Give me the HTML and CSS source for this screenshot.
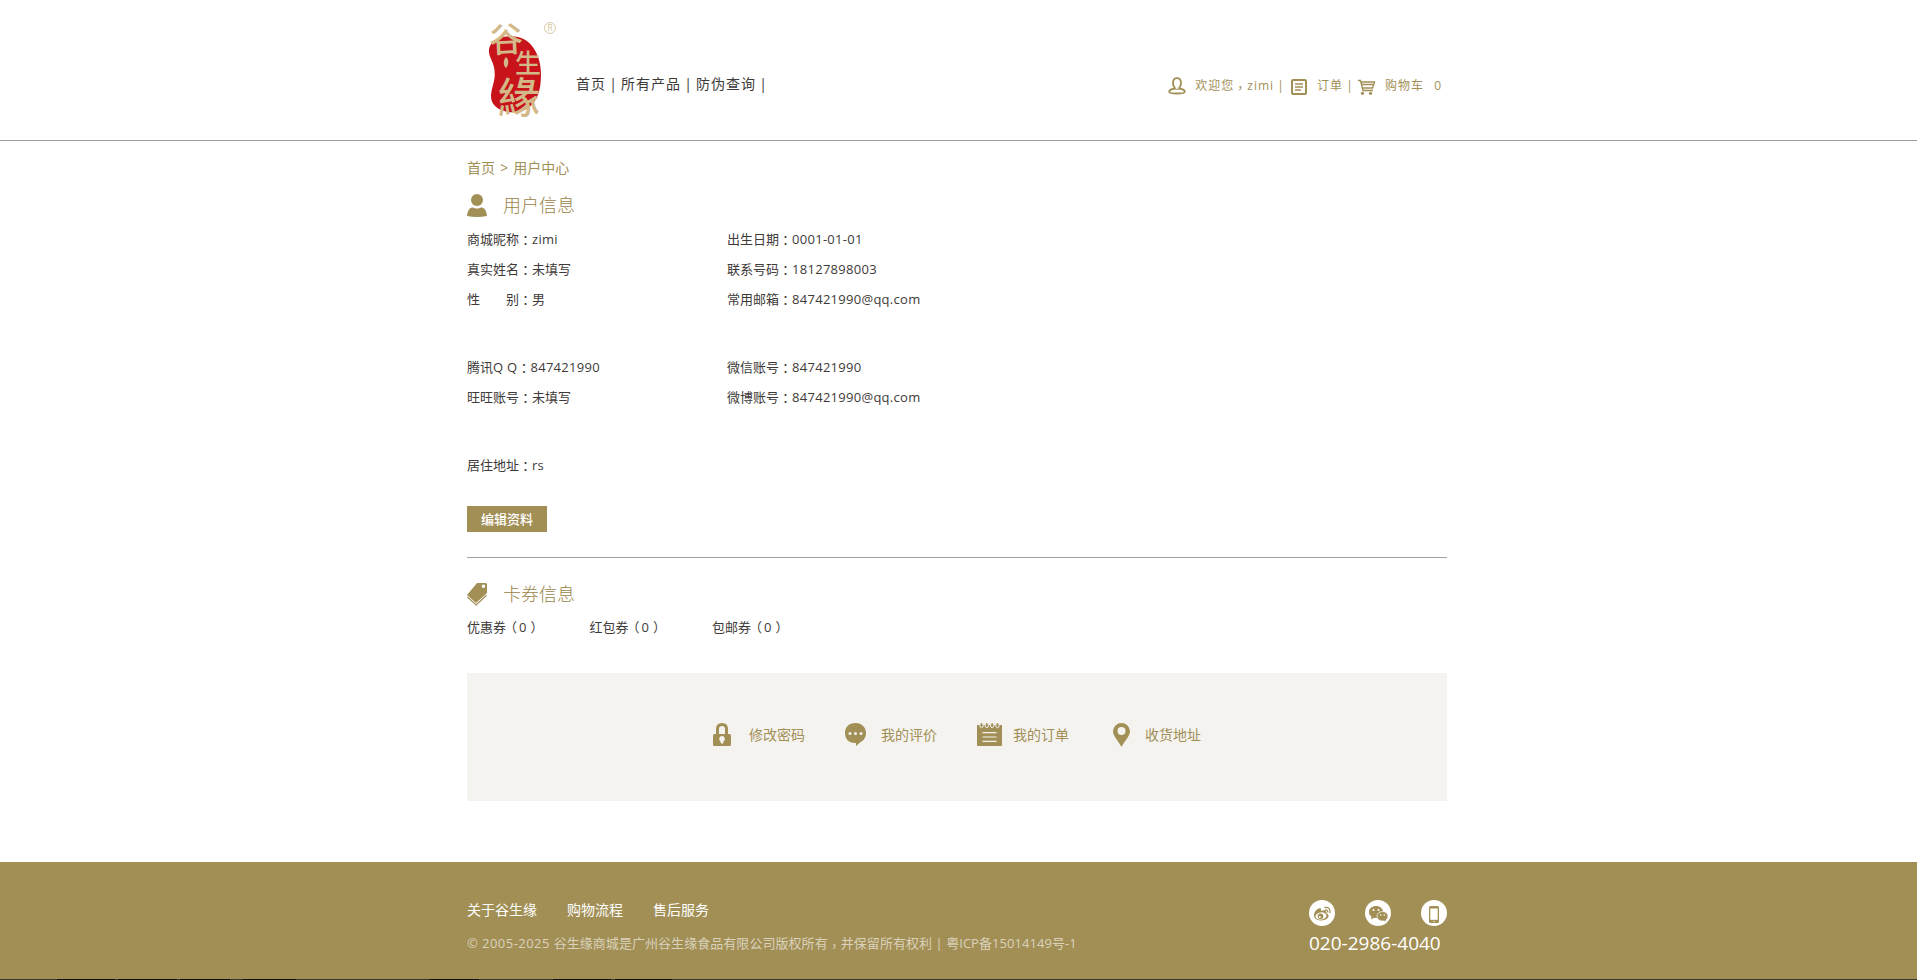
FILE: index.html
```html
<!DOCTYPE html>
<html lang="zh-CN">
<head>
<meta charset="utf-8">
<title>用户中心</title>
<link rel="stylesheet" href="styles.css">
</head>
<body>
<header class="header">
  <div class="wrap header-in">
    <svg class="logo" width="90" height="125" viewBox="0 -10 90 125" role="img" aria-label="谷生缘">
      <path d="M10 31C14 22 27 20 38 22C52 25 61 41 61 59C61 74 58 86 48 93C40 99 23 99 15 91C9 85 11 77 13 70C16 60 15 52 11 44C9 39 8 35 10 31Z" fill="#c8131b"/>
      <g class="logo-text" lang="zh-TW">
        <text x="9" y="37" font-size="34" transform="rotate(-3 26 25)">谷</text>
        <text x="35" y="57.500" font-size="26">生</text>
        <text x="18" y="98" font-size="42">緣</text>
      </g>
      <path d="M26 42C29 44 29 50 26 53C23 51 23 45 26 42Z" fill="#d3b888"/>
      <circle cx="70" cy="13" r="5.500" fill="none" stroke="#d6c5a0" stroke-width=".9"/>
      <text class="reg" x="67.300" y="16.300">R</text>
    </svg>
    <nav class="nav"><a>首页</a><i>|</i><a>所有产品</a><i>|</i><a>防伪查询</a><i>|</i></nav>
    <div class="account">
      <svg class="person" width="18" height="18" viewBox="0 0 18 18" fill="none" stroke="#a28f56" stroke-width="1.800"><path d="M5 6.200C5 3 6.500 1.200 9 1.200S13 3 13 6.200C13 8.400 12 10 11.300 10.800V11.500C14 12 16.800 13 16.800 14.700C16.800 16 13 16.500 9 16.500S1.200 16 1.200 14.700C1.200 13 4 12 6.700 11.500V10.800C6 10 5 8.400 5 6.200Z"/><path d="M6.700 11.800Q9 13 11.300 11.800" stroke-width="1"/></svg>
      <span class="hello">欢迎您<b class="c comma" lang="zh-TW">，</b>zimi</span><i>|</i>
      <svg class="order" width="16" height="16" viewBox="0 0 16 16" fill="none" stroke="#a28f56"><rect x="1" y="1" width="14" height="14" rx="1" stroke-width="2"/><path d="M4 5H12M4 8H12M4 11H10" stroke-width="1.500"/></svg>
      <span class="ord">订单</span><i>|</i>
      <svg class="cart" width="18" height="16" viewBox="0 0 18 16" fill="none" stroke="#a28f56" stroke-width="1.400"><path d="M0 1.500H2.500L5 11.500H15M3 3H16.500L14.500 9H4.500M3.500 5.500H15"/><g fill="#a28f56" stroke="none"><circle cx="4.500" cy="14.300" r="1.600"/><circle cx="12.500" cy="14.300" r="1.600"/></g></svg>
      <span class="buy">购物车</span><span class="num">0</span>
    </div>
  </div>
</header>
<main class="wrap">
  <div class="crumb">首页 &gt; 用户中心</div>
  <h2 class="title user"><svg width="20" height="23" viewBox="0 0 20 23" fill="#a28f56"><circle cx="10" cy="6" r="6"/><path d="M0 22C.5 16 3 13.500 6 13.500C8 14.800 12 14.800 14 13.500C17 13.500 19.500 16 20 22Q10 24 0 22Z"/></svg>用户信息</h2>
  <div class="info first">
    <p>商城昵称<b class="c" lang="zh-TW">：</b><span>zimi</span></p><p>出生日期<b class="c" lang="zh-TW">：</b><span>0001-01-01</span></p>
    <p>真实姓名<b class="c" lang="zh-TW">：</b>未填写</p><p>联系号码<b class="c" lang="zh-TW">：</b><span>18127898003</span></p>
    <p>性　　别<b class="c" lang="zh-TW">：</b>男</p><p>常用邮箱<b class="c" lang="zh-TW">：</b><span>847421990@qq.com</span></p>
  </div>
  <div class="info">
    <p>腾讯<span>Q Q</span><b class="c" lang="zh-TW">：</b><span>847421990</span></p><p>微信账号<b class="c" lang="zh-TW">：</b><span>847421990</span></p>
    <p>旺旺账号<b class="c" lang="zh-TW">：</b>未填写</p><p>微博账号<b class="c" lang="zh-TW">：</b><span>847421990@qq.com</span></p>
  </div>
  <div class="info"><p>居住地址<b class="c" lang="zh-TW">：</b><span>rs</span></p></div>
  <button class="edit">编辑资料</button>
  <h2 class="title card"><svg width="20" height="23" viewBox="0 0 20 23"><path fill="#a28f56" fill-rule="evenodd" d="M10 0H19L20 1V10L9 20L0 12ZM16.500 1.500A1.800 1.800 0 1 0 16.500 5.100A1.800 1.800 0 1 0 16.500 1.500Z"/><path d="M.3 14L9.200 22L19.500 12.300" fill="none" stroke="#a28f56" stroke-width="1.200"/></svg>卡券信息</h2>
  <div class="coupons"><div>优惠券<s>（</s>0<u>）</u></div><div>红包券<s>（</s>0<u>）</u></div><div>包邮券<s>（</s>0<u>）</u></div></div>
  <div class="links">
    <a><span class="ico"><svg width="18" height="23" viewBox="0 0 18 23"><path d="M4.500 12V6C4.500 3 6 1.500 9 1.500S13.500 3 13.500 6V12" fill="none" stroke="#a28f56" stroke-width="3"/><rect y="11" width="18" height="12" rx="1.500" fill="#a28f56"/><path d="M9 13A3 3 0 0 0 7.500 18.500V19.500L9 21L10.500 19.500V18.500A3 3 0 0 0 9 13Z" fill="#f4f3ef"/></svg></span>修改密码</a>
    <a><span class="ico"><svg width="21" height="23" viewBox="0 0 21 23"><path d="M10.500 0C17 0 21 4.500 21 10C21 15 18 18 15 19.500L11 23V20C4 20.500 0 16 0 10S4 0 10.500 0Z" fill="#a28f56"/><g fill="#f4f3ef"><circle cx="5" cy="10.500" r="1.500"/><circle cx="10.500" cy="10.500" r="1.500"/><circle cx="16" cy="10.500" r="1.500"/></g></svg></span>我的评价</a>
    <a><span class="ico"><svg width="25" height="23" viewBox="0 0 25 23"><path d="M0 2H25V22Q25 23 24 23H1Q0 23 0 22Z" fill="#a28f56"/><g fill="#a28f56" stroke="#f4f3ef"><ellipse cx="4.500" cy="2.200" rx="1.700" ry="2.500"/><ellipse cx="9.800" cy="2.200" rx="1.700" ry="2.500"/><ellipse cx="15.200" cy="2.200" rx="1.700" ry="2.500"/><ellipse cx="20.500" cy="2.200" rx="1.700" ry="2.500"/></g><path d="M5.500 9.700H19.500M5.500 14H19.500M5.500 18.300H19.500" stroke="#f4f3ef" stroke-width="1.200"/></svg></span>我的订单</a>
    <a><span class="ico pin"><svg width="17" height="24" viewBox="0 0 17 24"><path fill="#a28f56" fill-rule="evenodd" d="M8.500 0A8.500 8.500 0 0 1 17 8.500C17 13 11 19 8.500 24C6 19 0 13 0 8.500A8.500 8.500 0 0 1 8.500 0ZM8.500 4A4 4 0 1 0 8.500 12A4 4 0 1 0 8.500 4Z"/></svg></span>收货地址</a>
  </div>
</main>
<footer class="footer">
  <div class="wrap footer-in">
    <div>
      <div class="flinks"><a>关于谷生缘</a><a>购物流程</a><a>售后服务</a></div>
      <p class="copy"><span>© 2005-2025 </span> 谷生缘商城是广州谷生缘食品有限公司版权所有<b class="c comma" lang="zh-TW">，</b>并保留所有权利 | 粤ICP备15014149号-1</p>
    </div>
    <div class="contact">
      <div class="social">
        <svg width="26" height="26" viewBox="0 0 26 26"><circle cx="13" cy="13" r="13" fill="#fff"/><path d="M12 9.500C12 7.500 9 8 6.500 11C3 16 6 20.500 12 20.500C18 20.500 21 16.500 19 14.500C17 13 17.500 12.500 17 11C16 9.500 13.500 10.500 12 11Z" fill="#a28f56"/><ellipse cx="12" cy="16" rx="5.500" ry="3.600" fill="#fff" transform="rotate(-8 12 16)"/><circle cx="11.500" cy="16.300" r="2.800" fill="#a28f56"/><circle cx="10.800" cy="16.900" r="1" fill="#fff"/><path d="M15.500 7.500Q21.500 6.500 21 13M16 10Q19 9.500 18.700 12.500" fill="none" stroke="#a28f56" stroke-width="1.300"/></svg>
        <svg width="26" height="26" viewBox="0 0 26 26"><circle cx="13" cy="13" r="13" fill="#fff"/><path d="M11 6C15 6 18 8.500 18 12C18 15.500 15 18 11 18L9 17.800L6 19.500L6.500 16.800C5 15.700 4 14 4 12C4 8.500 7 6 11 6Z" fill="#a28f56"/><path d="M17.500 11.500C21 11.500 23 13.700 23 16.200C23 17.800 22.200 19 21 20L21.300 22L19 20.900C15 21.500 12 19.500 12 16.200C12 13.500 14.500 11.500 17.500 11.500Z" fill="#a28f56" stroke="#fff" stroke-width=".7"/><g fill="#fff"><circle cx="8.500" cy="10" r="1"/><circle cx="13.500" cy="10" r="1"/><circle cx="15.700" cy="15" r=".8"/><circle cx="19.300" cy="15" r=".8"/></g></svg>
        <svg width="26" height="26" viewBox="0 0 26 26"><circle cx="13" cy="13" r="13" fill="#fff"/><rect x="8" y="6" width="10" height="17" rx="1.500" fill="#a28f56"/><rect x="9.300" y="8.500" width="7.400" height="11.300" fill="#fff"/><circle cx="13" cy="21.400" r=".7" fill="#fff"/></svg>
      </div>
      <div class="tel">020-2986-4040</div>
    </div>
  </div>
</footer>
<div class="edge"></div>
</body>
</html>
```
FILE: styles.css
```css
* { box-sizing: border-box; margin: 0; padding: 0; }
body { height: 980px; overflow: hidden; background: #fff; color: #3e3a39; font: 13px/30px "Open Sans", "Noto Sans CJK SC", sans-serif; white-space: nowrap; display: flex; flex-direction: column; }
svg { flex: none; display: block; }
i { font-style: normal; }
.c { font-family: "Noto Sans CJK TC", sans-serif; font-weight: 400; line-height: 1; vertical-align: -1px; }
.comma { vertical-align: -3px; }
.wrap { width: 980px; margin-left: 467px; }
.header { height: 141px; border-bottom: 1px solid #9f9c98; flex: none; }
.header-in { display: flex; align-items: flex-start; }
.logo { margin: 5px 0 0 13px; }
.logo-text { font-family: "Noto Sans CJK TC", sans-serif; font-weight: 500; fill: #d3b888; }
.reg { font: 9px "Open Sans", sans-serif; fill: #d6c5a0; }
.nav { margin: 69px 0 0 6px; font-size: 14px; letter-spacing: 1px; display: flex; }
.nav i { width: 15px; text-align: center; }
.account { margin: 71px 5px 0 auto; display: flex; align-items: center; color: #a28f56; font-size: 12px; letter-spacing: 1px; }
.hello { margin-left: 9px; }
.account i { width: 14px; text-align: center; }
.order { margin: 2px 0 0 3px; }
.ord { margin-left: 10px; }
.cart { margin: 2px 0 0 1px; }
.buy { margin-left: 9px; }
.num { margin-left: 10px; }
.crumb { margin-top: 12px; color: #a28f56; font-size: 14px; word-spacing: 1.5px; }
.title { display: flex; align-items: center; gap: 16px; height: 44px; color: #988448; font-size: 18px; font-weight: 300; }
.info { display: grid; grid-template-columns: 260px 1fr; grid-auto-rows: 30px; margin-bottom: 38px; }
.info span { letter-spacing: .28px; }
.first { margin-top: -3px; }
.edit { display: block; width: 80px; height: 26px; margin-top: -12px; border: 0; background: #a28f56; color: #fff; font: 500 13px/24px "Open Sans", "Noto Sans CJK SC", sans-serif; }
.card { margin-top: 25px; height: 55px; padding-top: 18px; border-top: 1px solid #9f9fa0; }
.coupons { display: flex; }
.coupons div { width: 122.500px; }
.coupons s, .coupons u { text-decoration: none; }
.coupons s { margin: 0 2px 0 -2px; }
.coupons u { margin-left: 4px; }
.links { height: 128px; margin-top: 31px; padding-bottom: 5px; background: #f4f3ef; color: #a28f56; font-size: 14px; display: flex; justify-content: center; gap: 40px; }
.links a { display: flex; align-items: center; }
.ico { width: 36px; }
.pin { padding-left: 4px; }
.footer { margin-top: auto; height: 117px; flex: none; background: #a28f56; color: #fff; }
.footer-in { display: flex; justify-content: space-between; }
.flinks { display: flex; gap: 30px; margin-top: 33px; font-size: 14px; }
.copy { color: #dad2bb; margin-top: 3px; letter-spacing: .05px; }
.copy span { letter-spacing: .45px; }
.social { display: flex; gap: 30px; margin-top: 38px; }
.tel { font-size: 19px; margin-top: 2px; }
.edge { height: 1px; flex: none; background: linear-gradient(90deg, #3a3828 57px, #111 57px 115px, #3a3828 115px 118px, #111 118px 177px, #3a3828 177px 180px, #111 180px 230px, #3a3828 230px 243px, #111 243px 296px, #3a3828 296px 429px, #111 429px 479px, #3a3828 479px 553px, #111 553px 611px, #3a3828 611px 615px, #111 615px 672px, #3a3828 672px); }
```
